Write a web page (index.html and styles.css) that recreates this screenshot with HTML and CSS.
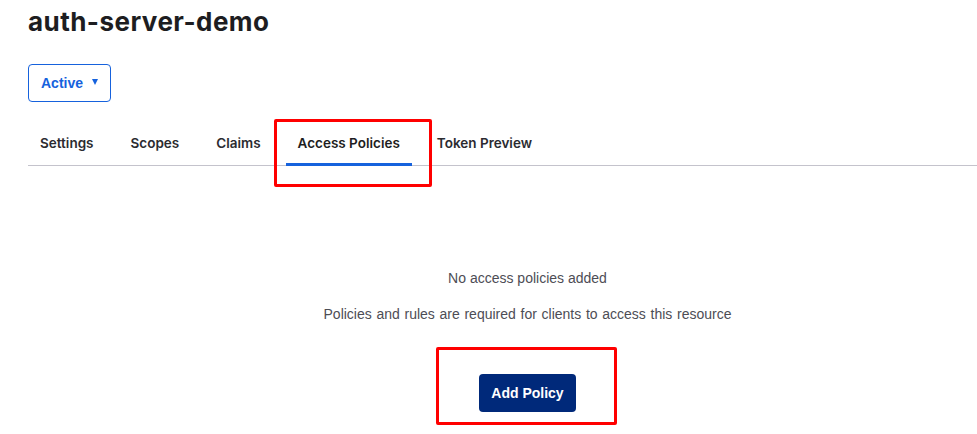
FILE: index.html
```html
<!DOCTYPE html>
<html lang="en">
<head>
<meta charset="utf-8">
<title>auth-server-demo</title>
<link rel="stylesheet" href="styles.css">
</head>
<body>
<main class="page">
  <h1 class="title">auth-server-demo</h1>
  <button class="status">Active <span class="caret"></span></button>
  <nav class="tabs">
    <a class="tab">Settings</a>
    <a class="tab">Scopes</a>
    <a class="tab">Claims</a>
    <a class="tab active">Access Policies</a>
    <a class="tab">Token Preview</a>
  </nav>
  <section class="empty">
    <p class="empty-title">No access policies added</p>
    <p class="empty-desc">Policies and rules are required for clients to access this resource</p>
    <button class="primary">Add Policy</button>
  </section>
</main>
</body>
</html>
```

FILE: styles.css
```css
html, body {
  margin: 0;
  padding: 0;
  background: #ffffff;
  overflow: hidden;
}
body {
  width: 977px;
  height: 434px;
}
.page {
  padding: 0 0 0 28px;
  font-family: "Liberation Sans", Arial, sans-serif;
}
.title {
  margin: 0;
  padding-top: 6px;
  font-family: Inter, "Liberation Sans", sans-serif;
  font-weight: 700;
  font-size: 26px;
  line-height: 32px;
  color: #1d1d21;
  letter-spacing: 0.45px;
}
.status {
  margin-top: 26px;
  display: flex;
  align-items: center;
  gap: 9px;
  height: 38px;
  width: 83px;
  padding: 0 0 0 12px;
  border: 1px solid #1662dd;
  border-radius: 4px;
  background: #fff;
  color: #1662dd;
  font-family: "Liberation Sans", Arial, sans-serif;
  font-weight: 700;
  font-size: 14px;
}
.caret {
  width: 0;
  height: 0;
  border-left: 3.5px solid transparent;
  border-right: 3.5px solid transparent;
  border-top: 6px solid #1662dd;
  margin-top: -2px;
}
.tabs {
  margin-top: 19px;
  display: flex;
  gap: 13px;
  border-bottom: 1px solid #c4c3cc;
  height: 44px;
}
.tab {
  position: relative;
  padding: 0 12px;
  height: 44px;
  display: flex;
  align-items: center;
  font-family: Inter, "Liberation Sans", sans-serif;
  font-weight: 600;
  font-size: 13.5px;
  color: #2b2b30;
}
.tab.active {
  color: #1d1d21;
}
.tab.active::before {
  content: "";
  position: absolute;
  left: 0;
  right: 0;
  bottom: -1px;
  height: 3px;
  background: #1662dd;
}
.tab.active::after {
  content: "";
  position: absolute;
  left: -12px;
  right: -20px;
  top: -2px;
  bottom: -22px;
  border: 3px solid #ff0000;
  border-radius: 2px;
}
.empty {
  display: flex;
  flex-direction: column;
  align-items: center;
  padding-top: 103px;
  padding-left: 50px;
}
.empty p {
  margin: 0;
  font-size: 14px;
  line-height: 18px;
  color: #4d4d55;
}
.empty-desc {
  margin-top: 18px !important;
  word-spacing: 0.8px;
}
.primary {
  position: relative;
  margin-top: 51px;
  height: 38px;
  width: 97px;
  border: none;
  border-radius: 4px;
  background: #00297a;
  color: #ffffff;
  font-family: "Liberation Sans", Arial, sans-serif;
  font-weight: 700;
  font-size: 14px;
}
.primary::after {
  content: "";
  position: absolute;
  left: -43px;
  right: -41px;
  top: -27px;
  bottom: -13px;
  border: 3px solid #ff0000;
  border-radius: 2px;
}
```
